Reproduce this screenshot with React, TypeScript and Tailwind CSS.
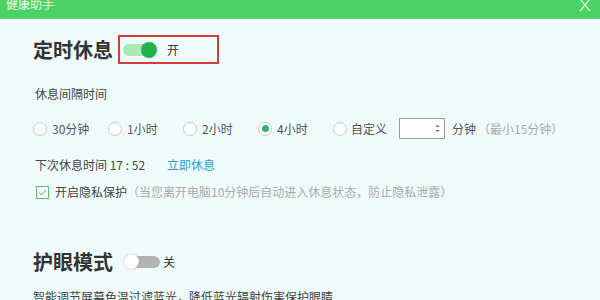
import { useState } from 'react';

const FONT = '"Noto Sans CJK SC", "Noto Sans", sans-serif';

const intervals = ['30分钟', '1小时', '2小时', '4小时'];

function Radio({ checked }: { checked?: boolean }) {
  return (
    <span className="w-[14px] h-[14px] rounded-full border border-[#c9c9c9] bg-white flex items-center justify-center shrink-0">
      {checked && <span className="w-[7px] h-[7px] rounded-full bg-[#2fb46c]" />}
    </span>
  );
}

function Toggle({ on }: { on: boolean }) {
  if (on) {
    return (
      <span className="relative w-[34px] h-[16px] flex items-center">
        <span className="w-[30px] h-[12px] rounded-full bg-[#a9e9b6]" />
        <span className="absolute right-0 w-[16px] h-[16px] rounded-full bg-[#22b24c]" />
      </span>
    );
  }
  return (
    <span className="relative w-[36px] h-[16px] flex items-center">
      <span className="ml-[6px] w-[30px] h-[12px] rounded-full bg-[#b3b3b3]" />
      <span className="absolute left-0 w-[15px] h-[15px] rounded-full bg-white shadow-[0_0_2px_rgba(0,0,0,0.3)]" />
    </span>
  );
}

export default function App() {
  const [selected] = useState(3);

  return (
    <div className="w-[600px] h-[300px] overflow-hidden bg-[#eefbfa] text-[#444]" style={{ fontFamily: FONT }}>
      {/* title bar */}
      <div className="h-[19px] bg-[#4bd264] border-b border-[#6fd884] flex items-start justify-between px-[6px]">
        <span className="text-[12px] leading-[12px] -mt-[2px] text-[#e9fbe9]">健康助手</span>
        <svg width="12" height="13" viewBox="0 0 12 13" className="mr-[3px] -mt-[1px]">
          <path d="M1 0 L11 12 M11 0 L1 12" stroke="#d9f7de" strokeWidth="1.2" fill="none" />
        </svg>
      </div>

      <div className="pl-[33px] pt-[16px] flex flex-col">
        {/* 定时休息 */}
        <div className="flex items-center h-[29px]">
          <span className="text-[20px] font-bold text-[#333] leading-[29px]">定时休息</span>
          <div className="ml-[5px] w-[101px] h-[29px] border-2 border-[#d43c3c] flex items-center pl-[3px]">
            <Toggle on />
            <span className="ml-[10px] text-[12px] text-[#333]">开</span>
          </div>
        </div>

        <div className="mt-[22px] pl-[2px] text-[12px] leading-[16px]">休息间隔时间</div>

        <div className="mt-[16px] flex items-center h-[21px] text-[12px]">
          {intervals.map((label, i) => (
            <div key={label} className="w-[75px] flex items-center gap-[5px]">
              <Radio checked={i === selected} />
              <span className="text-[#555]">{label}</span>
            </div>
          ))}
          <div className="flex items-center gap-[4px]">
            <Radio />
            <span className="text-[#555]">自定义</span>
          </div>
          <div className="ml-[12px] w-[46px] h-[21px] border border-[#9a9a9a] bg-white flex items-center justify-end pr-[4px]">
            <svg width="5" height="9" viewBox="0 0 5 9">
              <path d="M0.5 3 L2.5 1 L4.5 3 Z M0.5 6 L2.5 8 L4.5 6 Z" fill="#666" />
            </svg>
          </div>
          <span className="ml-[7px] text-[#555]">分钟</span>
          <span className="ml-[2px] text-[#aaa]">（最小15分钟）</span>
        </div>

        <div className="mt-[18px] pl-[2px] flex items-center text-[12px] leading-[16px]">
          <span>下次休息时间 17 : 52</span>
          <span className="ml-[22px] text-[#2a9fd0]">立即休息</span>
        </div>

        <div className="mt-[11px] pl-[3px] flex items-center text-[12px] leading-[16px]">
          <span className="w-[13px] h-[13px] border border-[#5cbf7a] bg-white flex items-center justify-center">
            <svg width="9" height="7" viewBox="0 0 9 7">
              <path d="M1 3.5 L3.5 6 L8 1" stroke="#4aa865" strokeWidth="1" fill="none" />
            </svg>
          </span>
          <span className="ml-[6px] text-[#444]">开启隐私保护</span>
          <span className="text-[#aaa]">（当您离开电脑10分钟后自动进入休息状态，防止隐私泄露）</span>
        </div>

        {/* 护眼模式 */}
        <div className="mt-[47px] flex items-center h-[29px]">
          <span className="text-[20px] font-bold text-[#333] leading-[29px]">护眼模式</span>
          <span className="ml-[11px]">
            <Toggle on={false} />
          </span>
          <span className="ml-[3px] text-[12px] text-[#333]">关</span>
        </div>

        <div className="mt-[13px] text-[12px] leading-[16px] text-[#444]">
          智能调节屏幕色温过滤蓝光，降低蓝光辐射伤害保护眼睛
        </div>
      </div>
    </div>
  );
}
